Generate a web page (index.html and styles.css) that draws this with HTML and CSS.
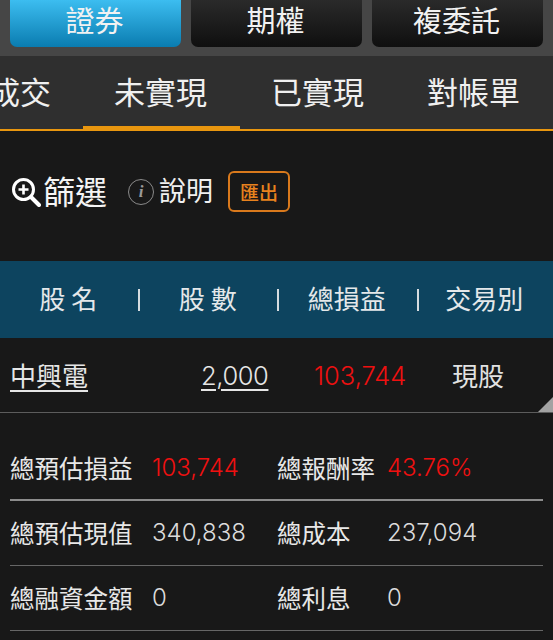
FILE: index.html
```html
<!DOCTYPE html>
<html lang="zh-Hant">
<head>
  <meta charset="UTF-8">
  <title>未實現</title>
  <link rel="stylesheet" href="styles.css">
</head>
<body>
  <div class="market-bar">
    <div class="market-btn active">證券</div>
    <div class="market-btn">期權</div>
    <div class="market-btn">複委託</div>
  </div>

  <div class="tabs">
    <div class="tab">成交</div>
    <div class="tab active">未實現</div>
    <div class="tab">已實現</div>
    <div class="tab">對帳單</div>
  </div>

  <div class="tools">
    <div class="filter">
      <svg class="zoom-icon" width="30" height="30" viewBox="0 0 30 30">
        <circle cx="12.5" cy="12.5" r="10" fill="none" stroke="#fff" stroke-width="3"/>
        <path d="M7.5 12.5h10M12.5 7.5v10" stroke="#fff" stroke-width="2.6" fill="none"/>
        <path d="M20 20l8 8" stroke="#fff" stroke-width="4" stroke-linecap="round" fill="none"/>
      </svg>
      <span class="tool-text">篩選</span>
    </div>
    <div class="help">
      <span class="info-icon">i</span>
      <span class="tool-text">說明</span>
    </div>
    <div class="export">匯出</div>
  </div>

  <div class="table-head">
    <div class="head-cell spaced">股名</div>
    <div class="head-cell spaced">股數</div>
    <div class="head-cell">總損益</div>
    <div class="head-cell">交易別</div>
  </div>

  <div class="stock-row">
    <div class="stock-name">中興電</div>
    <div class="stock-qty num">2,000</div>
    <div class="stock-pl num up">103,744</div>
    <div class="stock-type">現股</div>
    <div class="corner"></div>
  </div>

  <div class="summary">
    <div class="sum-row strong">
      <div class="sum-label">總預估損益</div>
      <div class="sum-value up">103,744</div>
      <div class="sum-label">總報酬率</div>
      <div class="sum-value up">43.76%</div>
    </div>
    <div class="sum-row">
      <div class="sum-label">總預估現值</div>
      <div class="sum-value">340,838</div>
      <div class="sum-label">總成本</div>
      <div class="sum-value">237,094</div>
    </div>
    <div class="sum-row">
      <div class="sum-label">總融資金額</div>
      <div class="sum-value">0</div>
      <div class="sum-label">總利息</div>
      <div class="sum-value">0</div>
    </div>
  </div>
</body>
</html>
```

FILE: styles.css
```css
html, body {
  margin: 0;
  padding: 0;
}
body {
  width: 553px;
  height: 640px;
  overflow: hidden;
  background: #181818;
  color: #e6e6e6;
  font-family: "Liberation Sans", "Noto Sans CJK TC", sans-serif;
}

.market-bar {
  display: flex;
  gap: 10px;
  height: 56px;
  box-sizing: border-box;
  padding: 0 10px 9px;
  background: #464646;
}
.market-btn {
  flex: 1;
  display: flex;
  align-items: center;
  justify-content: center;
  padding-bottom: 10px;
  padding-right: 2px;
  font-size: 29px;
  color: #f2f2f2;
  border-radius: 0 0 7px 7px;
  background: linear-gradient(#2a2a2a, #0f0f0f);
}
.market-btn.active {
  background: linear-gradient(#3cbdf0, #0a7cb0);
}

.tabs {
  display: flex;
  height: 75px;
  box-sizing: border-box;
  margin-left: -42px;
  background: #2f2f2f;
  border-bottom: 2px solid #e8960f;
}
.tab {
  flex: none;
  height: 75px;
  box-sizing: border-box;
  padding: 0 32px 6px 31px;
  display: flex;
  align-items: center;
  font-size: 31px;
  color: #f0f0f0;
}
.tab.active {
  padding: 0 33px 1px 31px;
  border-bottom: 5px solid #e8960f;
}

.tools {
  display: flex;
  align-items: center;
  height: 130px;
  padding: 0 0 9px 11px;
  box-sizing: border-box;
}
.tool-text {
  margin-top: -4px;
}
.filter {
  display: flex;
  align-items: center;
  gap: 2px;
  font-size: 32px;
  color: #f4f4f4;
}
.help {
  display: flex;
  align-items: center;
  gap: 5px;
  margin-left: 21px;
  font-size: 27px;
  color: #f0f0f0;
}
.info-icon {
  width: 24px;
  height: 24px;
  border: 1px solid #8a8a8a;
  border-radius: 50%;
  display: flex;
  align-items: center;
  justify-content: center;
  font-family: "Liberation Serif", serif;
  font-style: italic;
  font-weight: bold;
  font-size: 17px;
  color: #9a9a9a;
}
.export {
  margin-left: 15px;
  width: 62px;
  height: 41px;
  box-sizing: border-box;
  border: 2px solid #d9791c;
  border-radius: 6px;
  display: flex;
  align-items: center;
  justify-content: center;
  font-size: 19px;
  font-weight: 500;
  color: #e8821e;
}

.table-head {
  display: flex;
  height: 77px;
  background: #0d445f;
  align-items: center;
}
.head-cell {
  flex: 0 0 139.5px;
  box-sizing: border-box;
  padding-right: 4px;
  text-align: center;
  font-size: 26px;
  line-height: 26px;
  color: #e4e8ea;
  position: relative;
}
.head-cell:not(:last-child)::after {
  content: "";
  position: absolute;
  right: 0;
  top: 2px;
  width: 2px;
  height: 22px;
  background: #d5dcdf;
}
.head-cell:last-child {
  padding-right: 8px;
}
.head-cell.spaced {
  padding: 0 0 0 3px;
  letter-spacing: 6px;
}

.stock-row {
  display: flex;
  align-items: center;
  height: 75px;
  box-sizing: border-box;
  padding-bottom: 1px;
  border-bottom: 1px solid #5c5c5c;
  font-size: 26px;
  position: relative;
}
.num {
  font-family: Inter, "Liberation Sans", sans-serif;
  font-weight: 300;
  font-size: 25.5px;
  padding-top: 1px;
}
.stock-name {
  width: 190px;
  padding-left: 10px;
  box-sizing: border-box;
  text-decoration: underline;
  text-underline-offset: 4px;
}
.stock-qty {
  width: 124px;
  padding-left: 11px;
  box-sizing: border-box;
  letter-spacing: -0.4px;
  text-decoration: underline;
  text-underline-offset: 4px;
  text-decoration-thickness: 2px;
}
.stock-pl {
  width: 138px;
}
.stock-type {
  color: #e2e2e2;
}
.corner {
  position: absolute;
  right: 0;
  bottom: 0;
  width: 0;
  height: 0;
  border-left: 15px solid transparent;
  border-bottom: 15px solid #a2a2a2;
}
.up {
  color: #ee1010;
}

.summary {
  margin: 23px 10px 0;
}
.sum-row {
  display: grid;
  grid-template-columns: 142px 125px 110px 1fr;
  align-items: center;
  height: 65px;
  box-sizing: border-box;
  padding: 0 0 1px 0;
  border-bottom: 1px solid #666;
}
.sum-row.strong {
  border-bottom: 2px solid #8c8c8c;
}
.sum-label {
  font-size: 24.5px;
  color: #e8e8e8;
}
.sum-value {
  font-family: Inter, "Liberation Sans", sans-serif;
  font-weight: 300;
  font-size: 24px;
  color: #dcdcdc;
}
.sum-value.up {
  color: #f01010;
}
```
